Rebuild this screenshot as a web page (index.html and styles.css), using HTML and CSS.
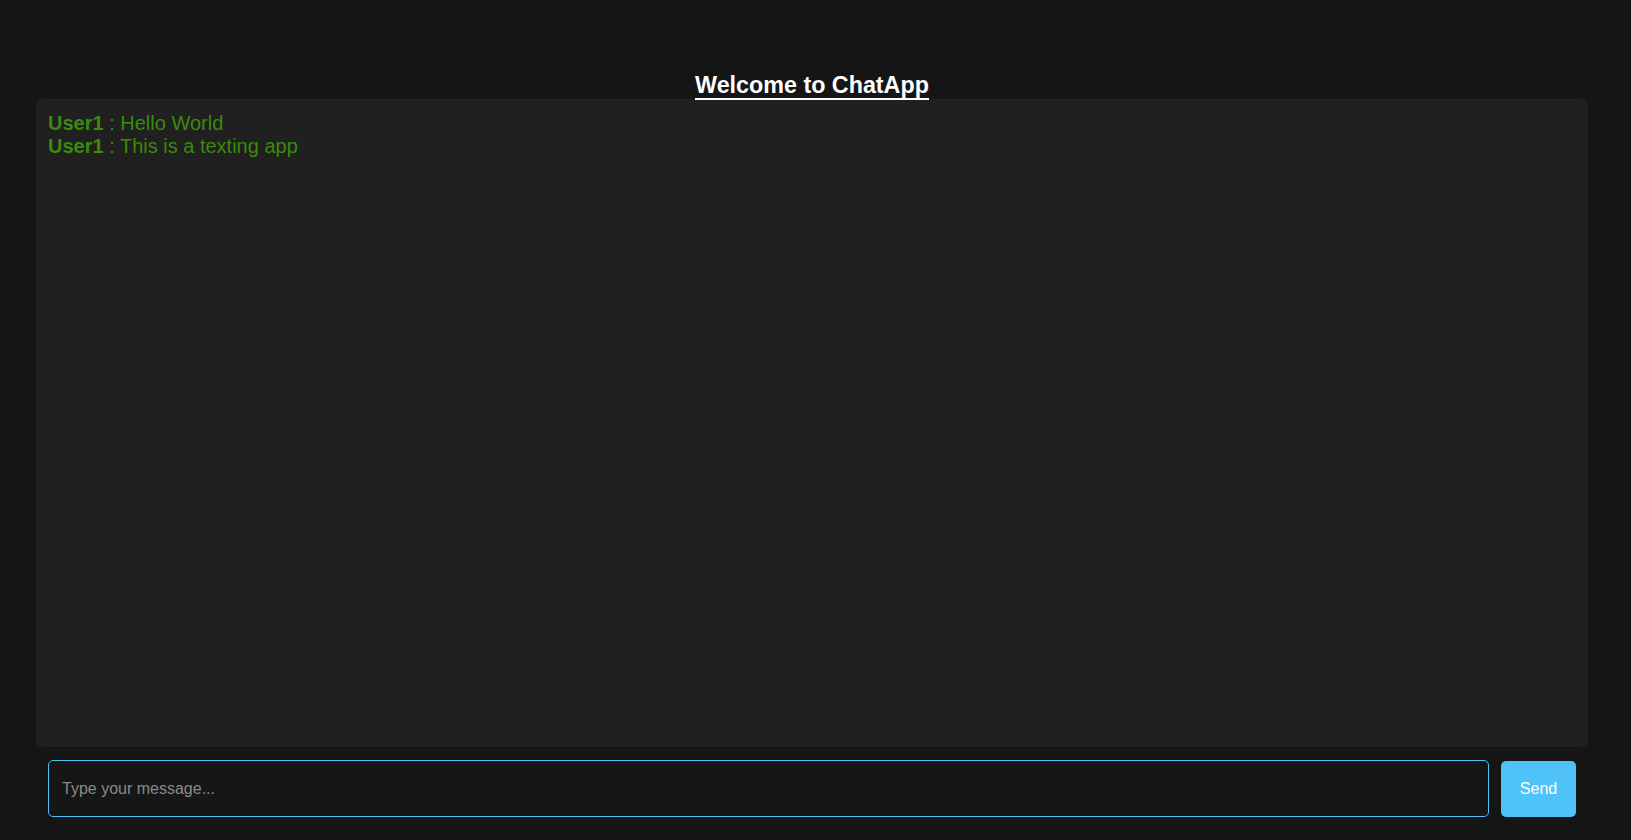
FILE: index.html
```html
<!DOCTYPE html>
<html lang="en">
<head>
<meta charset="utf-8">
<title>ChatApp</title>
<link rel="stylesheet" href="styles.css">
</head>
<body>
<div class="app">
  <h2 class="title"><span class="title-text">Welcome to ChatApp</span></h2>
  <div class="messages">
    <div class="msg"><b class="user">User1</b> : Hello World</div>
    <div class="msg"><b class="user">User1</b> : This is a texting app</div>
  </div>
  <form class="composer" onsubmit="return false">
    <input class="input" type="text" placeholder="Type your message..." autofocus>
    <button class="send" type="submit">Send</button>
  </form>
</div>
</body>
</html>
```
FILE: styles.css
```css
html, body {
  margin: 0;
  padding: 0;
  background: #151515;
  font-family: "Liberation Sans", Arial, sans-serif;
}
.app {
  margin: 0 43px 0 36px;
  padding-top: 72px;
}
.title {
  margin: 0;
  text-align: center;
  font-size: 23.3px;
  font-weight: bold;
  color: #ffffff;
  line-height: normal;
}
.title-text {
  border-bottom: 2px solid #ffffff;
}
.messages {
  height: 648px;
  box-sizing: border-box;
  background: #202020;
  border-radius: 6px;
  padding: 13px 12px;
  color: #3a8a0c;
  font-size: 20px;
  line-height: 23px;
}
.user {
  font-weight: bold;
}
.composer {
  margin: 13px 0 0 0;
  padding: 0 12px;
  display: flex;
  align-items: center;
  gap: 12px;
}
.input {
  flex: 1;
  height: 57px;
  box-sizing: border-box;
  background: #161616;
  border: 1px solid #4fc3f7;
  border-radius: 5px;
  padding: 0 13px;
  font-family: "Liberation Sans", Arial, sans-serif;
  font-size: 16px;
  color: #e0e0e0;
  outline: none;
}
.input::placeholder {
  color: #8a8a8a;
}
.send {
  width: 75px;
  height: 56px;
  background: #4fc3f7;
  border: none;
  border-radius: 5px;
  color: #ffffff;
  font-family: "Liberation Sans", Arial, sans-serif;
  font-size: 16px;
  padding: 0;
  cursor: pointer;
}
```
